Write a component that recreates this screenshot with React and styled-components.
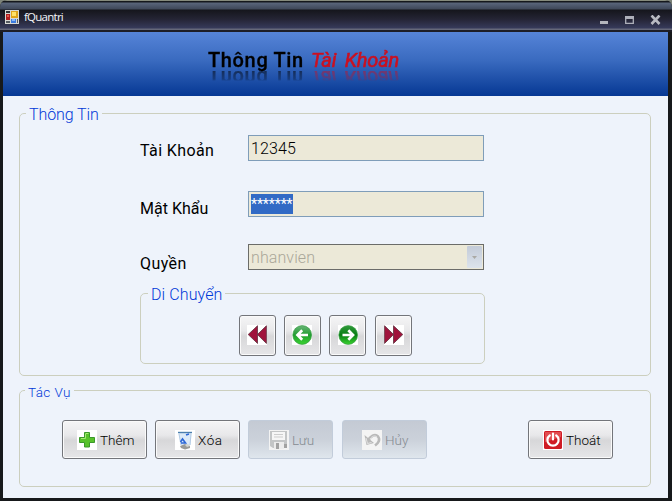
import React from "react";
import styled, { createGlobalStyle, css } from "styled-components";

const Global = createGlobalStyle`
  * { box-sizing: border-box; }
  body { margin: 0; overflow: hidden; background: #7d8379; }
`;

const Window = styled.div`
  width: 672px;
  height: 501px;
  display: flex;
  flex-direction: column;
  border-radius: 7px 7px 0 0;
  overflow: hidden;
  background: #17191b;
  font-family: Roboto, "Liberation Sans", sans-serif;
  color: #000;
`;

const TitleBar = styled.div`
  height: 32px;
  flex: none;
  display: flex;
  align-items: flex-start;
  padding: 10px 11px 0 5px;
  background: linear-gradient(#858a7c 0 1px, #15181d 1px 2px, #59657b 3px, #3f485a 9px, #15161c 10px, #242434 19px, #363a5a 28px, #656879 29px, #656879 30px, #1d1d27 30px);
`;

const Caption = styled.div`
  flex: 1;
  margin: 0 0 0 5px;
  color: #f2f4f8;
  font: 11.5px/14px "Open Sans", "Noto Sans", sans-serif;
  letter-spacing: -0.75px;
`;

const Controls = styled.div`
  display: flex;
  gap: 16px;
  padding-top: 5px;
`;

const Body = styled.div`
  flex: 1;
  margin: 0 4px 3px 3px;
  background: #eef3fb;
`;

const Banner = styled.div`
  height: 64px;
  padding: 13px 0 0 205px;
  display: flex;
  align-items: flex-start;
  gap: 7px;
  background: linear-gradient(#5684d8, #396abf 45%, #063894);
`;

const bannerText = css`
  font-size: 20px;
  line-height: 30px;
  white-space: nowrap;
  -webkit-box-reflect: below -12px linear-gradient(transparent 40%, rgba(0, 0, 0, 0.25) 46%, rgba(0, 0, 0, 0.5) 73%, transparent 75%);
`;

const BannerTitle = styled.span`
  ${bannerText}
  font-weight: 500;
  width: 96px;
  letter-spacing: 0.65px;
  -webkit-text-stroke: 0.3px #000;
`;

const BannerAccent = styled.span`
  ${bannerText}
  color: #cb1020;
  font-style: italic;
  word-spacing: 4px;
  letter-spacing: -0.2px;
  -webkit-text-stroke: 0.6px #cb1020;
`;

const Group = styled.fieldset`
  min-width: 0;
  width: ${(p) => p.$width}px;
  height: ${(p) => p.$height}px;
  margin: ${(p) => p.$margin};
  padding: 0;
  border: 1px solid #cccfbe;
  border-radius: 5px;
`;

const Legend = styled.legend`
  height: 19px;
  margin-left: ${(p) => p.$left}px;
  padding: 0 3px;
  color: #0038d8;
  font-size: ${(p) => p.$size || 16}px;
  line-height: 22px;
  font-weight: 300;
  letter-spacing: ${(p) => p.$spacing || 0}px;
  white-space: nowrap;
`;

const Field = styled.div`
  display: grid;
  grid-template-columns: 108px 236px;
  height: 26px;
  margin: ${(p) => p.$top}px 0 0 120px;
`;

const Label = styled.label`
  padding-top: ${(p) => p.$drop}px;
  font-size: 16px;
  line-height: 20px;
  letter-spacing: ${(p) => p.$spacing || 0}px;
  white-space: nowrap;
`;

const TextBox = styled.div`
  height: 26px;
  padding: 2px 1px 0 2px;
  display: flex;
  justify-content: space-between;
  border: 1px solid ${(p) => (p.$disabled ? "#6b6c69" : "#7f9db9")};
  background: #ece9d8;
  color: ${(p) => (p.$disabled ? "#aaa799" : "#000")};
  font-size: 16px;
  line-height: 21px;
  font-weight: 300;
  letter-spacing: ${(p) => p.$spacing || 0}px;
`;

const Selection = styled.span`
  width: 42px;
  height: 20px;
  background: #316ac5;
  color: #fff;
  line-height: 20px;
  font-size: 14px;
  font-weight: 400;
  letter-spacing: -0.1px;
  white-space: nowrap;
`;

const DropArrow = styled.span`
  width: 15px;
  height: 22px;
  margin-top: -1px;
  display: grid;
  place-items: center;
  border-radius: 1px;
  background: linear-gradient(#c3cbd8, #dce3ec);
`;

const NavRow = styled.div`
  display: flex;
  gap: 8px;
  padding: 12px 0 0 98px;
`;

const ActionRow = styled.div`
  display: flex;
  gap: 8px;
  padding: 20px 0 0 42px;
`;

const Button = styled.button`
  flex: none;
  width: 85px;
  height: 39px;
  padding: 0 0 0 ${(p) => p.$inset || 14}px;
  display: flex;
  align-items: center;
  gap: 3px;
  border: 1px solid #73757a;
  border-radius: 3px;
  box-shadow: inset 0 0 0 1px #fafafa;
  background: linear-gradient(#f5f5f6, #e8e8ea 38%, #d7d7d9 52%, #e6e6e8);
  color: #000;
  font-family: inherit;
  font-size: 13.5px;
  line-height: 18px;
  font-weight: 300;
  letter-spacing: ${(p) => p.$spacing || 0}px;
  margin-left: ${(p) => p.$shift || 0}px;
  &:disabled {
    border-color: #c2ccda;
    box-shadow: none;
    background: linear-gradient(#c4cad4, #cbd1da 50%, #dfe6ed);
    color: #858b91;
  }
`;

const NavButton = styled(Button)`
  width: 37px;
  height: 41px;
  padding: 0 0 2px ${(p) => p.$inset || 7}px;
`;

const Icon = styled.svg`
  display: block;
  flex: none;
`;

const AppIcon = () => (
  <Icon width="14" height="14" viewBox="0 0 14 14">
    <path fill="#d8d9d5" d="M0 0h14v14H0z" />
    <path fill="#30343b" d="M1 1h4v2H1z" />
    <path fill="#b11d20" d="M1 4h4v6H1z" />
    <path fill="#e35b50" d="M2 5h2v2H2z" />
    <path fill="#dfa51a" d="M6 1h7v7H6z" />
    <path fill="#ffe268" d="M7 2h4v4H7z" />
    <path fill="#3c7ce0" d="M6 9h5v4H6z" />
    <path fill="#8db9f5" d="M7 9h3v2H7z" />
    <path fill="#555a61" d="M1 11h4v2H1zM12 9h1v4h-1z" />
  </Icon>
);

const WindowIcon = ({ kind }) => (
  <Icon width={kind === "close" ? 11 : 9} height="10" viewBox={`0 0 ${kind === "close" ? 11 : 9} 10`}>
    {kind === "min" && <path fill="#b4b6bd" d="M0 6h8v3H0z" />}
    {kind === "max" && (
      <>
        <path fill="none" stroke="#aeb0ba" strokeWidth="1.3" d="M.7 1.700h7.600v6.600H.7z" />
        <path fill="#aeb0ba" d="M0 1h9v3H0z" />
      </>
    )}
    {kind === "close" && <path stroke="#b8bac1" strokeWidth="2.6" d="m1.500 .5 8 8.500M9.500.5l-8 8.500" />}
  </Icon>
);

const Tile = ({ children }) => (
  <Icon width="20" height="20" viewBox="0 0 20 20">
    <path fill="#fff" d="M0 0h20v20H0z" />
    {children}
  </Icon>
);

const DoubleArrow = ({ forward }) => (
  <Tile>
    <g fill="#a0133c" stroke="#6b3a48" strokeWidth=".9" transform={forward ? "translate(20 0) scale(-1 1)" : undefined}>
      <path d="M1.200 9.500 10.500.8v17.600zM10.400 9.500 19.400.8v17.600z" />
    </g>
  </Tile>
);

const CircleArrow = ({ forward }) => (
  <Tile>
    <defs>
      <linearGradient id={forward ? "fwd" : "back"} x2="0" y2="1">
        <stop stopColor={forward ? "#2f9a3a" : "#68b576"} />
        <stop offset=".5" stopColor={forward ? "#087d13" : "#219d31"} />
        <stop offset="1" stopColor="#39d42f" />
      </linearGradient>
    </defs>
    <circle cx="10.200" cy="10" r="9.400" fill={`url(#${forward ? "fwd" : "back"})`} stroke="#3a9b45" strokeWidth=".7" />
    <path
      fill="none"
      stroke="#fff"
      strokeWidth="2.700"
      d={forward ? "M4.500 10h10M10.300 5.300l4.700 4.700-4.700 4.700" : "M16 10H6M10.200 5.300 5.500 10l4.700 4.700"}
    />
  </Tile>
);

const PlusIcon = () => (
  <Tile>
    <path fill="#58c22b" stroke="#3b982b" d="M7.500 2.500h5v5h5v5h-5v4.500h-5v-4.500h-5v-5h5z" />
    <path fill="none" stroke="#a4e972" d="M8.500 3.500h3M4 8.500h4.500V4" />
  </Tile>
);

const BinIcon = () => (
  <Tile>
    <path fill="#dceaf8" d="M3.500 3h13l-1 12H6z" />
    <path stroke="#4b7fae" strokeWidth="1.400" d="M3 2.500h14" />
    <path stroke="#b3cbe5" fill="none" d="m4 4 2 11M16 4l-1 11" />
    <path fill="none" stroke="#2c67d6" strokeWidth="1.600" d="m5.500 12 2-3 3 4H6M11 5l3-1" />
    <path fill="#9a9b98" d="m5 16 5-2 5 2v2l-5 1.500L6 18z" />
    <path fill="#d4d5d0" d="m10 15 3-1 2 2-3 1z" />
  </Tile>
);

const SaveIcon = () => (
  <Tile>
    <path fill="#f3f3f3" d="M0 0h20v20H0z" />
    <path fill="#c3c5c6" d="M1 1h17v17H4l-3-2z" />
    <path fill="#f6f6f6" d="M3 2h13v8H3z" />
    <path stroke="#cdcdcd" d="M5 4.500h9M5 7h9" />
    <path fill="#ececec" d="M5 12h10v7H5z" />
    <path fill="#a2a2a2" d="M7 13h3v6H7zM15 14h3v4h-3z" />
  </Tile>
);

const UndoIcon = () => (
  <Tile>
    <path fill="#f4f4f4" d="M0 0h20v20H0z" />
    <path fill="none" stroke="#b9b9b9" strokeWidth="2.600" d="M6 11c2-5 7-7.500 10-4.500 2.500 3 .5 6.500-3 9" />
    <path fill="#b9b9b9" d="m2.500 5 2 10 7.500-2z" />
    <path fill="none" stroke="#e4e4e4" strokeWidth="1" d="m4 8 1.500 5.500 4-1M8 9c2-3 5-4 7-2" />
  </Tile>
);

const PowerIcon = () => (
  <Tile>
    <rect x="1" y="1" width="18" height="18" rx="1.500" fill="#cf1b23" />
    <path fill="#ed6969" opacity=".65" d="M2 2h16v5L2 12z" />
    <path fill="none" stroke="#fff" strokeWidth="2.200" strokeLinecap="round" d="M6.800 5.500a5.600 5.600 0 1 0 6.400 0M10 3.500v6" />
  </Tile>
);

export default function App() {
  return (
    <Window>
      <Global />
      <TitleBar>
        <AppIcon />
        <Caption>fQuantri</Caption>
        <Controls>
          <WindowIcon kind="min" />
          <WindowIcon kind="max" />
          <WindowIcon kind="close" />
        </Controls>
      </TitleBar>
      <Body>
        <Banner>
          <BannerTitle>Thông Tin</BannerTitle>
          <BannerAccent>Tài Khoản</BannerAccent>
        </Banner>
        <Group $width={632} $height={272} $margin="8px 0 0 16px">
          <Legend $left={6} $spacing={-0.1}>Thông Tin</Legend>
          <Field $top={12}>
            <Label $drop={6} $spacing={0.4}>Tài Khoản</Label>
            <TextBox $spacing={0.1}>12345</TextBox>
          </Field>
          <Field $top={30}>
            <Label $drop={8}>Mật Khẩu</Label>
            <TextBox><Selection>*******</Selection></TextBox>
          </Field>
          <Field $top={27}>
            <Label $drop={10} $spacing={0.4}>Quyền</Label>
            <TextBox $disabled $spacing={0.1}>
              nhanvien
              <DropArrow>
                <Icon width="5" height="3" viewBox="0 0 5 3"><path fill="#aaa9a4" d="M0 0h5L2.500 3z" /></Icon>
              </DropArrow>
            </TextBox>
          </Field>
          <Group $width={345} $height={80} $margin="14px 0 0 120px">
            <Legend $left={7} $spacing={0.1}>Di Chuyển</Legend>
            <NavRow>
              <NavButton aria-label="Đầu"><DoubleArrow /></NavButton>
              <NavButton aria-label="Trước"><CircleArrow /></NavButton>
              <NavButton aria-label="Sau" $inset={8}><CircleArrow forward /></NavButton>
              <NavButton aria-label="Cuối" $shift={1} $inset={8}><DoubleArrow forward /></NavButton>
            </NavRow>
          </Group>
        </Group>
        <Group $width={632} $height={106} $margin="5px 0 0 16px">
          <Legend $left={5} $size={13.5} $spacing={0.4}>Tác Vụ</Legend>
          <ActionRow>
            <Button><PlusIcon />Thêm</Button>
            <Button $inset={19} $spacing={0.5}><BinIcon />Xóa</Button>
            <Button $inset={20} disabled><SaveIcon />Lưu</Button>
            <Button $inset={19} disabled $shift={1}><UndoIcon />Hủy</Button>
            <Button $shift={93}><PowerIcon />Thoát</Button>
          </ActionRow>
        </Group>
      </Body>
    </Window>
  );
}
